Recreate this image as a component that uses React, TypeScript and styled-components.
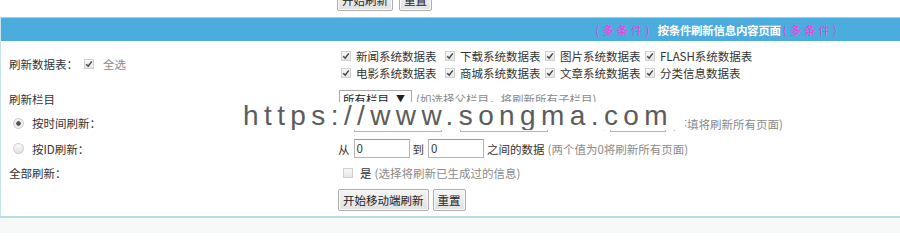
import React from "react";
import styled, {createGlobalStyle} from "styled-components";

const GlobalStyle = createGlobalStyle`
    html, body {
        margin: 0;
        padding: 0;
        background: #ffffff;
    }
    body {
        font-family: "Noto Sans CJK SC", "Liberation Sans", sans-serif;
        font-size: 11.5px;
        color: #333;
    }
`;

const Page = styled.div`
    position: relative;
    width: 900px;
    height: 233px;
    overflow: hidden;
    background: #f7f8f8;
`;

const TopStrip = styled.div`
    height: 17px;
    background: #fff;
    padding-left: 337px;
    display: flex;
    gap: 6px;
    align-items: flex-end;
    box-sizing: border-box;
    padding-bottom: 6px;
`;

const Button = styled.button`
    height: 22px;
    padding: 0 4px;
    font: 11.5px "Noto Sans CJK SC", "Liberation Sans", sans-serif;
    color: #222;
    line-height: 20px;
    background: linear-gradient(#f4f4f4, #e2e2e2);
    border: 1px solid #adadad;
    border-radius: 2px;
    box-shadow: inset 0 0 0 1px #fafafa;
`;

const Table = styled.div`
    background: #fff;
    border-left: 1px solid #c6e4ea;
    border-bottom: 2px solid #b9dcdc;
    height: 201px;
    box-sizing: border-box;
`;

const Header = styled.div`
    height: 24px;
    background: #4badde;
    border-top: 1px solid #9ad3ec;
    box-sizing: border-box;
    display: flex;
    align-items: center;
    justify-content: flex-end;
    padding-right: 60px;
`;

const Pink = styled.span`
    color: #f03ede;
    letter-spacing: 3px;
`;

const Title = styled.span`
    color: #fff;
    font-weight: bold;
    letter-spacing: -0.3px;
    margin: 0 2px 0 5px;
`;

const Row = styled.div<{ $h: number }>`
    display: flex;
    align-items: center;
    height: ${(p) => p.$h}px;
`;

const Label = styled.div`
    width: 337px;
    padding-left: 8px;
    box-sizing: border-box;
    display: flex;
    align-items: center;
    gap: 6px;
    flex-shrink: 0;
`;

const Value = styled.div<{ $shift?: number }>`
    display: flex;
    align-items: center;
    white-space: nowrap;
    margin-top: ${(p) => p.$shift ?? 0}px;
`;

const Hint = styled.span`
    color: #8a8a8a;
    margin-left: 3px;
`;

const CheckGrid = styled.div`
    display: grid;
    grid-template-columns: 104px 100px 100px 110px;
    row-gap: 1px;
    padding-left: 3px;
`;

const CheckItem = styled.label`
    display: flex;
    align-items: center;
    gap: 5px;
    height: 16px;
    white-space: nowrap;
`;

const Box = styled.span`
    width: 8px;
    height: 8px;
    border: 1px solid #cfcfcf;
    background: linear-gradient(#f8f8f8, #e6e6e6);
    display: inline-flex;
    align-items: center;
    justify-content: center;
    flex-shrink: 0;
`;

const Radio = styled.span<{ $on?: boolean }>`
    width: 9px;
    height: 9px;
    border-radius: 50%;
    border: 1px solid #cbcbcb;
    background: ${(p) => p.$on ? "radial-gradient(circle, #555 0 2px, #eee 2.5px)" : "linear-gradient(#fafafa, #e2e2e2)"};
    margin-left: 4px;
    margin-right: 2px;
`;

const Select = styled.div`
    width: 73px;
    height: 18px;
    border: 1px solid #a9a9a9;
    box-sizing: border-box;
    display: flex;
    align-items: center;
    justify-content: space-between;
    padding: 0 6px 0 3px;
    margin-left: 1px;
    margin-right: 1px;
    background: #fff;
    color: #222;
`;

const TextInput = styled.div<{ $w: number; $ml?: number; $lift?: number }>`
    width: ${(p) => p.$w}px;
    height: 19px;
    margin: 0 3px ${(p) => p.$lift ?? 0}px ${(p) => p.$ml ?? 4}px;
    border: 1px solid #b5b5b5;
    border-top-color: #9a9a9a;
    box-sizing: border-box;
    padding-left: 2px;
    line-height: 17px;
    background: #fff;
    color: #333;
`;

const ButtonRow = styled.div`
    display: flex;
    gap: 4px;
`;

const Watermark = styled.div`
    position: absolute;
    left: 240px;
    top: 102px;
    width: 445px;
    height: 28px;
    background: #fff;
    font-family: "Liberation Sans", sans-serif;
    font-size: 28px;
    line-height: 27px;
    letter-spacing: 5.4px;
    color: #5c5c5c;
    padding-left: 3px;
    box-sizing: border-box;
    white-space: nowrap;
    overflow: hidden;
`;

const Tick: React.FC = () => (
    <svg width="8" height="8" viewBox="0 0 8 8">
        <path d="M1.2 4.2 L3.2 6.2 L6.8 1.4" stroke="#444" strokeWidth="1.5" fill="none"/>
    </svg>
);

const Check: React.FC<{ on?: boolean }> = ({on = true}) => (
    <Box>{on && <Tick/>}</Box>
);

const tables = [
    "新闻系统数据表", "下载系统数据表", "图片系统数据表", "FLASH系统数据表",
    "电影系统数据表", "商城系统数据表", "文章系统数据表", "分类信息数据表",
];

const App: React.FC = () => {
    return (
        <>
            <GlobalStyle/>
            <Page>
                <TopStrip>
                    <Button>开始刷新</Button>
                    <Button>重置</Button>
                </TopStrip>
                <Table>
                    <Header>
                        <Pink>(多条件)</Pink>
                        <Title>按条件刷新信息内容页面</Title>
                        <Pink>(多条件)</Pink>
                    </Header>
                    <Row $h={46}>
                        <Label>
                            刷新数据表：
                            <Check/>
                            <Hint>全选</Hint>
                        </Label>
                        <CheckGrid>
                            {tables.map((t) => (
                                <CheckItem key={t}><Check/>{t}</CheckItem>
                            ))}
                        </CheckGrid>
                    </Row>
                    <Row $h={23}>
                        <Label>刷新栏目</Label>
                        <Value>
                            <Select><span>所有栏目</span><span style={{fontSize: 9}}>▼</span></Select>
                            <Hint>(如选择父栏目，将刷新所有子栏目)</Hint>
                        </Value>
                    </Row>
                    <Row $h={26}>
                        <Label><Radio $on/>按时间刷新：</Label>
                        <Value $shift={2}>
                            从<TextInput $w={88} $lift={4}/>
                            到<TextInput $w={88} $lift={4}/>
                            之间的数据<TextInput $w={56} $ml={1} $lift={4}/>
                            <Hint>(不填将刷新所有页面)</Hint>
                        </Value>
                    </Row>
                    <Row $h={25}>
                        <Label><Radio/>按ID刷新：</Label>
                        <Value>
                            从<TextInput $w={56}>0</TextInput>
                            到<TextInput $w={56}>0</TextInput>
                            之间的数据
                            <Hint>(两个值为0将刷新所有页面)</Hint>
                        </Value>
                    </Row>
                    <Row $h={23}>
                        <Label>全部刷新：</Label>
                        <Value style={{paddingLeft: 5}}>
                            <Check on={false}/>
                            <span style={{marginLeft: 7}}>是</span>
                            <Hint>(选择将刷新已生成过的信息)</Hint>
                        </Value>
                    </Row>
                    <Row $h={32}>
                        <Label/>
                        <ButtonRow>
                            <Button>开始移动端刷新</Button>
                            <Button>重置</Button>
                        </ButtonRow>
                    </Row>
                </Table>
                <Watermark>https://www.songma.com</Watermark>
            </Page>
        </>
    );
};

export default App;
